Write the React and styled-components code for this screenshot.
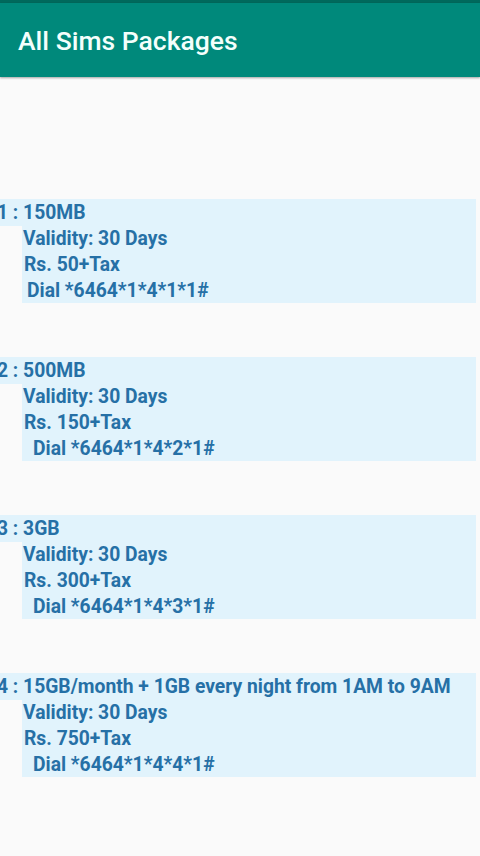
import React from 'react';
import styled, { createGlobalStyle } from 'styled-components';

const GlobalStyle = createGlobalStyle`
    html, body {
        margin: 0;
        padding: 0;
        background: #fafafa;
    }

    body {
        font-family: Roboto, "Noto Sans", sans-serif;
        overflow: hidden;
    }
`;

const Screen = styled.div`
    width: 480px;
    height: 856px;
    background: #fafafa;
    overflow: hidden;
`;

const StatusStrip = styled.div`
    height: 3px;
    background: #00695c;
`;

const Toolbar = styled.header`
    height: 74px;
    background: #00897b;
    display: flex;
    align-items: center;
    padding-left: 18px;
    box-shadow: 0 1px 2px rgba(0, 0, 0, 0.35);

    & > h1 {
        margin: 0;
        font-size: 26.5px;
        font-weight: 500;
        color: #f4fffc;
    }
`;

const List = styled.main`
    display: flex;
    flex-direction: column;
    gap: 54px;
    padding-top: 122px;
`;

const Card = styled.section`
    width: 476px;
    overflow: hidden;
`;

const Title = styled.div`
    height: 27px;
    background: #e1f3fc;
    font-size: 19.3px;
    font-weight: 700;
    color: #2670a6;
    line-height: 27px;
    white-space: nowrap;

    & > span {
        display: inline-block;
        margin-left: -3px;
    }
`;

const Body = styled.div`
    height: 77px;
    margin-left: 22px;
    background: #e1f3fc;
    display: flex;
    flex-direction: column;
`;

const Line = styled.div`
    height: 26px;
    line-height: 26px;
    font-size: 19.3px;
    font-weight: 700;
    color: #2670a6;
    padding-left: ${(p) => p.indent || 1}px;
    white-space: nowrap;
`;

const packages = [
    { no: 1, name: '150MB', price: 'Rs. 50+Tax', code: '*6464*1*4*1*1#', dial: 5 },
    { no: 2, name: '500MB', price: 'Rs. 150+Tax', code: '*6464*1*4*2*1#', dial: 11 },
    { no: 3, name: '3GB', price: 'Rs. 300+Tax', code: '*6464*1*4*3*1#', dial: 11 },
    {
        no: 4,
        name: '15GB/month + 1GB every night from 1AM to 9AM',
        price: 'Rs. 750+Tax',
        code: '*6464*1*4*4*1#',
        dial: 11,
    },
];

export default function App() {
    return (
        <Screen>
            <GlobalStyle />
            <StatusStrip />
            <Toolbar>
                <h1>All Sims Packages</h1>
            </Toolbar>
            <List>
                {packages.map((p) => (
                    <Card key={p.no}>
                        <Title>
                            <span>{p.no} : {p.name}</span>
                        </Title>
                        <Body>
                            <Line>Validity: 30 Days</Line>
                            <Line indent={2}>{p.price}</Line>
                            <Line indent={p.dial}>Dial {p.code}</Line>
                        </Body>
                    </Card>
                ))}
            </List>
        </Screen>
    );
}
